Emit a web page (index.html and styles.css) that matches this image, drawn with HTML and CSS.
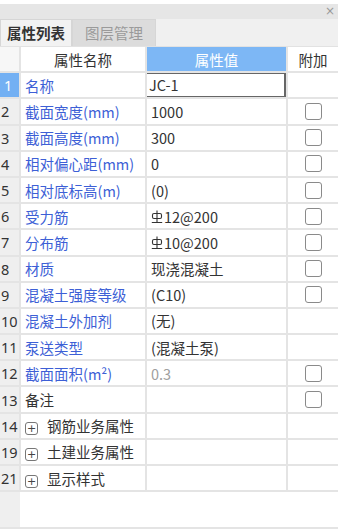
FILE: index.html
```html
<!DOCTYPE html>
<html lang="zh-CN">
<head>
    <meta charset="UTF-8">
    <meta name="viewport" content="width=device-width, initial-scale=1.0">
    <title>属性列表</title>
    <link rel="stylesheet" href="styles.css">
</head>
<body>
    <div id="panel">
        <div class="title-bar"><span class="close">×</span></div>
        <div class="tabs">
            <div class="tab active">属性列表</div>
            <div class="tab">图层管理</div>
        </div>

        <table class="grid">
            <colgroup>
                <col class="c-num">
                <col class="c-name">
                <col class="c-value">
                <col class="c-extra">
            </colgroup>
            <tr class="head">
                <th class="num"></th>
                <th>属性名称</th>
                <th class="sel">属性值</th>
                <th>附加</th>
            </tr>
            <tr>
                <td class="num sel">1</td>
                <td class="name">名称</td>
                <td class="value editing"><div class="edit">JC-1</div></td>
                <td></td>
            </tr>
            <tr>
                <td class="num">2</td>
                <td class="name">截面宽度(mm)</td>
                <td class="value">1000</td>
                <td><span class="check"></span></td>
            </tr>
            <tr>
                <td class="num">3</td>
                <td class="name">截面高度(mm)</td>
                <td class="value">300</td>
                <td><span class="check"></span></td>
            </tr>
            <tr>
                <td class="num">4</td>
                <td class="name">相对偏心距(mm)</td>
                <td class="value">0</td>
                <td><span class="check"></span></td>
            </tr>
            <tr>
                <td class="num">5</td>
                <td class="name">相对底标高(m)</td>
                <td class="value">(0)</td>
                <td><span class="check"></span></td>
            </tr>
            <tr>
                <td class="num">6</td>
                <td class="name">受力筋</td>
                <td class="value"><svg class="bar" width="12" height="14" viewBox="0 0 12 14"><rect x="1.5" y="3.5" width="9" height="5" rx="1.5" fill="none" stroke="#333" stroke-width="1.1"/><path d="M6 0.5V12M0.8 12.5H11.2" stroke="#333" stroke-width="1.1" fill="none"/></svg>12@200</td>
                <td><span class="check"></span></td>
            </tr>
            <tr>
                <td class="num">7</td>
                <td class="name">分布筋</td>
                <td class="value"><svg class="bar" width="12" height="14" viewBox="0 0 12 14"><rect x="1.5" y="3.5" width="9" height="5" rx="1.5" fill="none" stroke="#333" stroke-width="1.1"/><path d="M6 0.5V12M0.8 12.5H11.2" stroke="#333" stroke-width="1.1" fill="none"/></svg>10@200</td>
                <td><span class="check"></span></td>
            </tr>
            <tr>
                <td class="num">8</td>
                <td class="name">材质</td>
                <td class="value">现浇混凝土</td>
                <td><span class="check"></span></td>
            </tr>
            <tr>
                <td class="num">9</td>
                <td class="name">混凝土强度等级</td>
                <td class="value">(C10)</td>
                <td><span class="check"></span></td>
            </tr>
            <tr>
                <td class="num">10</td>
                <td class="name">混凝土外加剂</td>
                <td class="value">(无)</td>
                <td></td>
            </tr>
            <tr>
                <td class="num">11</td>
                <td class="name">泵送类型</td>
                <td class="value">(混凝土泵)</td>
                <td></td>
            </tr>
            <tr>
                <td class="num">12</td>
                <td class="name">截面面积(m²)</td>
                <td class="value muted">0.3</td>
                <td><span class="check"></span></td>
            </tr>
            <tr>
                <td class="num">13</td>
                <td class="plain">备注</td>
                <td class="value"></td>
                <td><span class="check"></span></td>
            </tr>
            <tr>
                <td class="num">14</td>
                <td class="plain"><span class="expand">+</span>钢筋业务属性</td>
                <td></td>
                <td></td>
            </tr>
            <tr>
                <td class="num">19</td>
                <td class="plain"><span class="expand">+</span>土建业务属性</td>
                <td></td>
                <td></td>
            </tr>
            <tr>
                <td class="num">21</td>
                <td class="plain"><span class="expand">+</span>显示样式</td>
                <td></td>
                <td></td>
            </tr>
        </table>

        <div class="filler"><div class="filler-num"></div></div>
    </div>
</body>
</html>
```

FILE: styles.css
```css
body, html {
    margin: 0;
    background: #ffffff;
    font-family: "Noto Sans CJK SC", "Noto Sans", sans-serif;
    color: #333333;
}

#panel {
    width: 338px;
    height: 532px;
    padding-top: 4px;
    box-sizing: border-box;
    display: flex;
    flex-direction: column;
}

.title-bar {
    height: 15px;
    background: #e6e6e6;
    display: flex;
    justify-content: flex-end;
    align-items: center;
}

.close {
    color: #999999;
    font-family: "DejaVu Sans", sans-serif;
    font-size: 12px;
    line-height: 15px;
    margin-right: 3px;
}

.tabs {
    height: 27px;
    background: #f0f0f0;
    display: flex;
    border-bottom: 1px solid #e2e2e2;
}

.tab {
    font-size: 14.5px;
    line-height: 25px;
    padding: 0 10px;
    width: 62px;
    text-align: center;
    background: #dcdcdc;
    color: #9a9a9a;
    border: 1px solid #d6d6d6;
    border-bottom: none;
}

.tab.active {
    width: 64px;
    padding: 0 3px;
    background: #f2f2f2;
    color: #333333;
    font-weight: bold;
}

.grid {
    border-collapse: collapse;
    table-layout: fixed;
    width: 338px;
    font-size: 14.5px;
}

.c-num { width: 20px; }
.c-name { width: 126px; }
.c-value { width: 141px; }
.c-extra { width: 51px; }

.grid td, .grid th {
    height: 24.2px;
    padding: 0;
    border: 2px solid #e4e4e4;
    white-space: nowrap;
    overflow: hidden;
}

.grid tr:first-child th { border-top: none; }
.grid tr td:first-child, .grid tr th:first-child { border-left: none; }
.grid tr td:last-child, .grid tr th:last-child { border-right: none; }

.grid th {
    font-weight: normal;
    background: #ffffff;
    text-align: center;
    color: #333333;
}

.grid th.num {
    background: #f7f7f7;
}

.grid th.sel {
    background: #7db7f5;
    color: #ffffff;
}

.num {
    background: #efefef;
    font-family: "Noto Sans", sans-serif;
    font-size: 14.5px;
    text-align: left;
    padding-left: 1px !important;
    color: #333333;
}

.num.sel {
    background: #73b0f3;
    color: #ffffff;
    padding-left: 4px !important;
}

.name {
    color: #3d5fd6;
    padding-left: 4px !important;
}

.plain {
    padding-left: 4px !important;
}

.value {
    padding-left: 4px !important;
}

.value.muted {
    color: #a0a0a0;
}

.value.editing {
    padding: 0 !important;
}

.edit {
    height: 22px;
    border: 2px solid #666666;
    line-height: 22px;
    padding-left: 2px;
    margin: -2px 0 -2px -2px;
}

.bar {
    vertical-align: -1px;
    margin-right: 1px;
}

.check {
    display: block;
    width: 15px;
    height: 15px;
    margin: 0 auto;
    border: 1.5px solid #8a8a8a;
    border-radius: 3px;
    background: #ffffff;
}

.expand {
    display: inline-block;
    width: 11px;
    height: 11px;
    border: 1.5px solid #777777;
    border-radius: 3px;
    font-family: "DejaVu Sans", sans-serif;
    font-size: 11px;
    line-height: 11px;
    text-align: center;
    color: #444444;
    margin-right: 9px;
    vertical-align: 0;
}

.filler {
    flex: 1;
    display: flex;
    border-bottom: 2px solid #e4e4e4;
    margin-bottom: 3px;
}

.filler-num {
    width: 20px;
    background: #efefef;
}
```
